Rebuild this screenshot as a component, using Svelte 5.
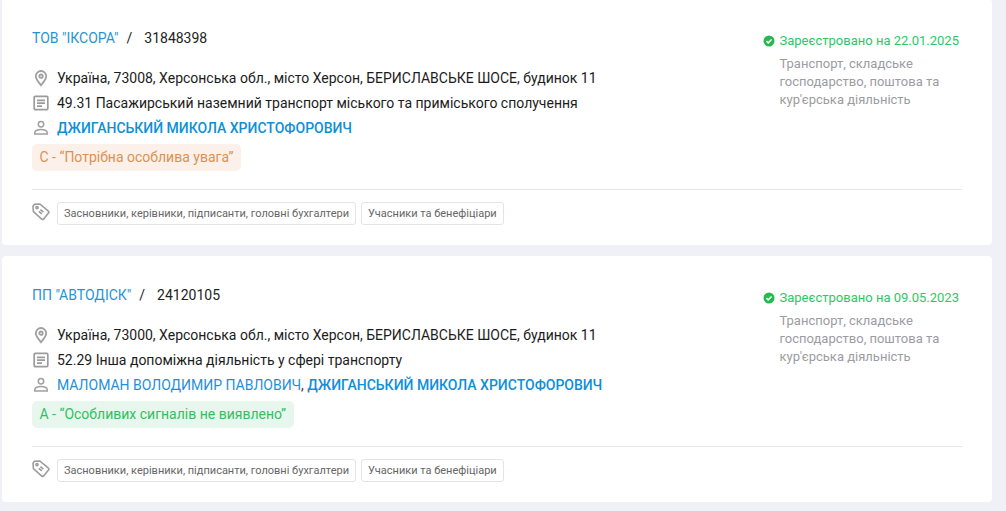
<script>
  const cards = [
    {
      name: 'ТОВ "ІКСОРА"', code: '31848398', address: 'Україна, 73008, Херсонська обл., місто Херсон, БЕРИСЛАВСЬКЕ ШОСЕ, будинок 11',
      kved: '49.31 Пасажирський наземний транспорт міського та приміського сполучення',
      people: [{ n: 'ДЖИГАНСЬКИЙ МИКОЛА ХРИСТОФОРОВИЧ', b: true }],
      risk: 'С - “Потрібна особлива увага”', tone: 'warn', date: '22.01.2025'
    },
    {
      name: 'ПП "АВТОДІСК"', code: '24120105', address: 'Україна, 73000, Херсонська обл., місто Херсон, БЕРИСЛАВСЬКЕ ШОСЕ, будинок 11',
      kved: '52.29 Інша допоміжна діяльність у сфері транспорту',
      people: [{ n: 'МАЛОМАН ВОЛОДИМИР ПАВЛОВИЧ', b: false }, { n: 'ДЖИГАНСЬКИЙ МИКОЛА ХРИСТОФОРОВИЧ', b: true }],
      risk: 'А - “Особливих сигналів не виявлено”', tone: 'ok', date: '09.05.2023'
    }
  ];
</script>

<div class="page">
  {#each cards as c}
    <article class="card">
      <div class="top">
        <div class="main">
          <div class="title"><a class="name">{c.name}</a><span class="sep">/</span><span class="code">{c.code}</span></div>
          <div class="rows">
            <div class="row">
              <svg class="ico" width="18" height="18" viewBox="0 0 18 18" fill="none" stroke="#a0a0a0" stroke-width="1.8"><path d="M9 16.2c-1-1.5-5.2-5.5-5.2-9a5.2 5.2 0 0 1 10.4 0c0 3.5-4.2 7.5-5.2 9z"/><circle cx="9" cy="7.2" r="1.7"/></svg>
              <span>{c.address}</span>
            </div>
            <div class="row">
              <svg class="ico" width="18" height="18" viewBox="0 0 18 18" fill="none" stroke="#9c9c9c" stroke-width="1.7"><rect x="2.2" y="2.4" width="13.6" height="13.2" rx="1"/><path d="M5 6.3h8M5 9.2h8M5 12.1h5"/></svg>
              <span>{c.kved}</span>
            </div>
            <div class="row">
              <svg class="ico" width="18" height="18" viewBox="0 0 18 18" fill="none" stroke="#a0a0a0" stroke-width="1.5"><circle cx="9" cy="5.3" r="2.7"/><path d="M2.8 15v-1.6c0-1.7 3.1-3 6.2-3s6.2 1.3 6.2 3V15z"/></svg>
              <span class="people">{#each c.people as p, i}{#if i > 0}<span class="comma">{', '}</span>{/if}<a class:bold={p.b}>{p.n}</a>{/each}</span>
            </div>
          </div>
          <div class="risk {c.tone}">{c.risk}</div>
        </div>
        <aside class="side">
          <div class="status">
            <svg width="12" height="12" viewBox="0 0 12 12"><circle cx="6" cy="6" r="5.5" fill="#27b84f"/><path d="M3.4 6.1l1.8 1.8 3.4-3.4" fill="none" stroke="#fff" stroke-width="1.5"/></svg>
            <span>Зареєстровано на {c.date}</span>
          </div>
          <div class="sector">Транспорт, складське господарство, поштова та кур'єрська діяльність</div>
        </aside>
      </div>
      <div class="tags">
        <svg class="tagico" width="18" height="18" viewBox="0 0 18 18" fill="none" stroke="#9c9c9c" stroke-width="1.6"><path d="M1 3.2 L2.4 1.2 L7.8 1 L16.4 8.2 a1.4 1.4 0 0 1 .1 1.9 L11.6 15.9 a1.4 1.4 0 0 1-1.9.2 L1.4 8.7z"/><circle cx="5" cy="4.6" r="1.1"/><path d="M6.8 8.4l3 2.5M8.4 6.7l3 2.5"/></svg>
        <span class="tag">Засновники, керівники, підписанти, головні бухгалтери</span>
        <span class="tag">Учасники та бенефіціари</span>
      </div>
    </article>
  {/each}
</div>

<style>
  :global(body) { margin: 0; background: #eff1f6; }
  .page {
    height: 511px; overflow: hidden; box-sizing: border-box;
    padding: 0 14px 0 2px; display: flex; flex-direction: column; gap: 11px;
    margin-top: -1px; font-family: Roboto, "Noto Sans", sans-serif;
  }
  .card {
    height: 246px; flex: none; box-sizing: border-box; background: #fff; border-radius: 4px;
    padding: 30px 30px 0; display: flex; flex-direction: column;
  }
  .top { display: flex; justify-content: space-between; height: 160px; border-bottom: 1px solid #e6e6e6; }
  .title { display: flex; align-items: center; font-size: 14px; line-height: 18px; color: #222; }
  .name { color: #1f95d8; }
  .sep { margin: 0 12px 0 8px; }
  .rows { margin-top: 22px; display: flex; flex-direction: column; gap: 7px; }
  .row { display: flex; align-items: center; gap: 16px; height: 18px; font-size: 14px; color: #1c1c1c; white-space: nowrap; }
  .ico { flex: none; width: 18px; }
  .row > span { margin-left: -9px; }
  .people a { color: #1f8fdc; }
  .people .bold { font-weight: 500; color: #0d8fd9; }
  .comma { color: #333; white-space: pre; }
  .risk { display: inline-block; margin-top: 7px; height: 27px; line-height: 27px; padding: 0 7.5px; border-radius: 5px; font-size: 14px; }
  .risk.warn { background: #fbf1ea; color: #e0904f; }
  .risk.ok { background: #e8f7ee; color: #32bf62; }
  .side { width: 199.5px; margin-top: 3px; font-size: 13px; }
  .status { display: flex; align-items: center; gap: 5px; color: #2ec766; line-height: 18px; }
  .sector { margin: 5px 0 0 17px; color: #9c9ca2; line-height: 18px; width: 172px; }
  .tags { display: flex; align-items: center; gap: 5px; margin-top: 12px; }
  .tagico { margin-right: 2px; margin-top: -3px; }
  .tag { height: 23px; line-height: 22px; box-sizing: border-box; border: 1px solid #e4e4e4; border-radius: 3px; padding: 0 6px; font-size: 11px; color: #666; white-space: nowrap; }
</style>
